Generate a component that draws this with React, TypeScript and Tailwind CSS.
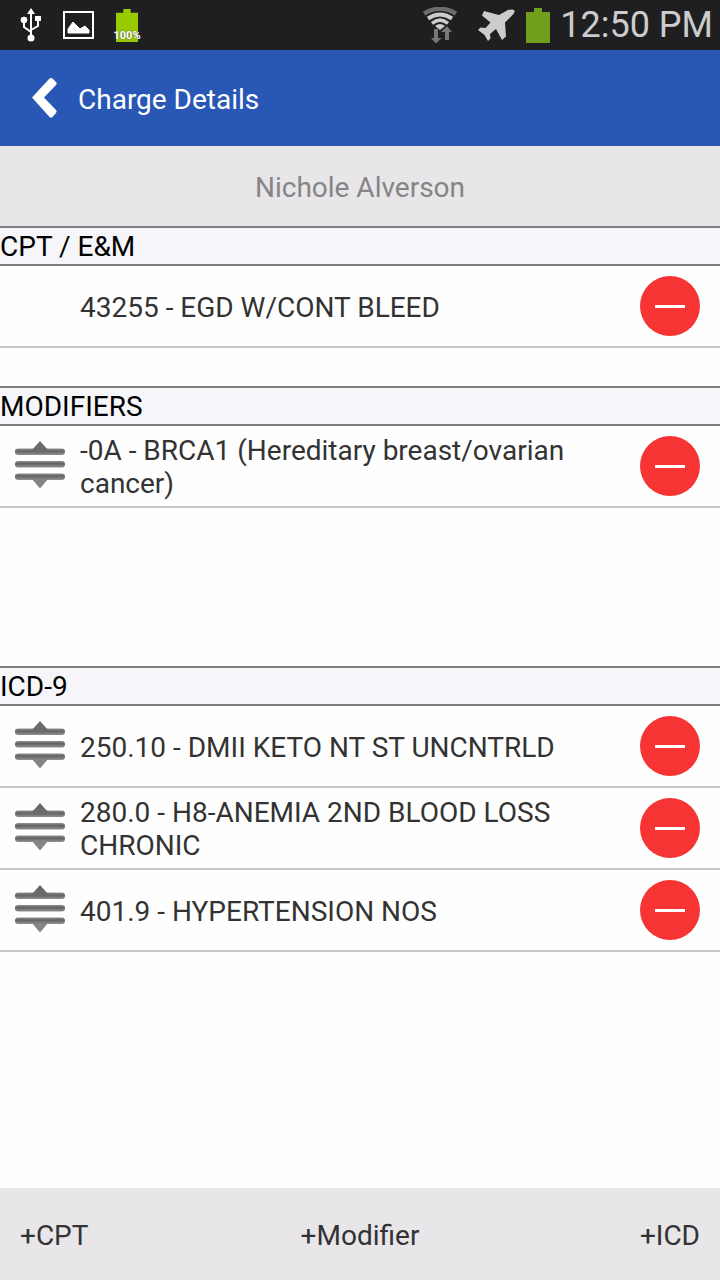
import React, { useState } from 'react';

interface ChargeItem {
  id: string;
  label: string;
}

const initialCpt: ChargeItem[] = [{ id: 'cpt-43255', label: '43255 - EGD W/CONT BLEED' }];

const initialModifiers: ChargeItem[] = [
  { id: 'mod-0a', label: '-0A - BRCA1 (Hereditary breast/ovarian cancer)' },
];

const initialIcd: ChargeItem[] = [
  { id: 'icd-250.10', label: '250.10 - DMII KETO NT ST UNCNTRLD' },
  { id: 'icd-280.0', label: '280.0 - H8-ANEMIA 2ND BLOOD LOSS CHRONIC' },
  { id: 'icd-401.9', label: '401.9 - HYPERTENSION NOS' },
];

const UsbIcon = () => (
  <svg width="22" height="34" viewBox="0 0 22 34" fill="none" stroke="#fff" strokeWidth="2" aria-hidden="true">
    <path d="M11 4v26M4 14v5l7 5M18 12v6l-7 4" />
    <path d="M11 0l4 6H7z" fill="#fff" stroke="none" />
    <circle cx="4" cy="12" r="3.3" fill="#fff" stroke="none" />
    <path d="M15 8h6v5h-6z" fill="#fff" stroke="none" />
    <circle cx="11" cy="30" r="3.5" fill="#fff" stroke="none" />
  </svg>
);

const PictureIcon = () => (
  <svg width="31" height="28" viewBox="0 0 31 28" aria-hidden="true">
    <path d="M1 1h29v26H1z" fill="none" stroke="#fff" strokeWidth="2" />
    <path d="M5 22v-4l5-7 5 5 2 2 5-3 4 4v3z" fill="#fff" stroke="#fff" strokeLinejoin="round" />
  </svg>
);

const WifiIcon = () => (
  <svg width="34" height="36" viewBox="0 0 34 36" fill="none" aria-hidden="true">
    <path d="M1 6.5Q17-3 33 6.5" stroke="#6c6c6c" strokeWidth="4.5" />
    <path d="M5 11.5Q17 3.5 29 11.5" stroke="#ccc" strokeWidth="4" />
    <path d="M9 16.3Q17 10 25 16.3" stroke="#ccc" strokeWidth="3.5" />
    <path d="M12 19Q17 15 22 19l-5 4z" fill="#ccc" />
    <path d="M11 22h4v9h3.5L13 36.5 8 31h3z" fill="#777" />
    <path d="M22 33h4v-8h3l-5-6-6 6h4z" fill="#777" />
  </svg>
);

const PlaneIcon = () => (
  <svg width="38" height="32" viewBox="0 0 38 32" fill="#ccc" aria-hidden="true">
    <path d="M37 1c1 1 .5 3-1 4.500l-8 8 1 14-4 3.500-6-11-6 5 .5 4.500-2.500 2.500-3.500-6L1 21l2.500-2.500 5 .5 5-5.500L5 6.500 7 2l15 4 8-4.500c2-1 6-1.500 7-.5z" />
  </svg>
);

const BatteryIcon = ({ color, width, height }: { color: string; width: number; height: number }) => (
  <svg width={width} height={height} viewBox="0 0 24 35" preserveAspectRatio="none" aria-hidden="true">
    <path d="M8 0h8v4h8v31H0V4h8z" fill={color} />
  </svg>
);

const BackIcon = () => (
  <svg width="26" height="42" viewBox="0 0 26 42" aria-hidden="true">
    <path d="M0 20.500L17.500 1.500q1.500-1 3 0l3.500 3.500q1.500 1.500 0 3L12 20.500 24 33q1.500 1.500 0 3l-3.500 4q-1.500 1.500-3 0z" fill="#fff" />
  </svg>
);

const DragIcon = () => (
  <svg width="50" height="52" viewBox="0 0 50 52" aria-hidden="true">
    <defs>
      <linearGradient id="bar" x1="0" y1="0" x2="0" y2="1">
        <stop offset="0" stopColor="#909090" />
        <stop offset="0.4" stopColor="#626262" />
        <stop offset="1" stopColor="#929292" />
      </linearGradient>
    </defs>
    <rect y="8.5" width="50" height="6.5" rx="3.2" fill="url(#bar)" />
    <path d="M17 10l8-9 8 9-4 3h-8z" fill="#6a6a6a" />
    <rect y="21" width="50" height="6.5" rx="3.2" fill="url(#bar)" />
    <rect y="33.5" width="50" height="6.5" rx="3.2" fill="url(#bar)" />
    <path d="M17 39h16l-8 9.5z" fill="#858585" />
  </svg>
);

const StatusBar = () => (
  <div className="flex h-[50px] items-center justify-between bg-[#1f1f21] pl-5 pr-[7px]">
    <div className="flex items-center gap-[21px]">
      <UsbIcon />
      <PictureIcon />
      <div className="relative flex w-6 justify-center">
        <BatteryIcon color="#99cc00" width={22} height={33} />
        <span className="absolute bottom-0 text-[11px] leading-3 font-bold text-white [text-shadow:0_0_2px_#555]">
          100%
        </span>
      </div>
    </div>
    <div className="flex items-center">
      <WifiIcon />
      <div className="ml-5 mr-[10px] flex items-center gap-[11px]">
        <PlaneIcon />
        <BatteryIcon color="#709f1b" width={24} height={35} />
      </div>
      <span className="text-[36px] leading-[50px] text-[#ccc]">12:50 PM</span>
    </div>
  </div>
);

interface ChargeRowProps {
  item: ChargeItem;
  sortable?: boolean;
  onRemove: (id: string) => void;
}

const ChargeRow: React.FC<ChargeRowProps> = ({ item, sortable, onRemove }) => (
  <li className="flex min-h-[82px] items-center border-b-2 border-[#c8c8c8] pr-5">
    <div className="flex w-20 shrink-0 justify-center">
      {sortable && (
        <button type="button" aria-label={`Move ${item.label}`}>
          <DragIcon />
        </button>
      )}
    </div>
    <span className="flex-1 pt-0.5 text-[28px] leading-[33px] text-[#333]">{item.label}</span>
    <button
      type="button"
      onClick={() => onRemove(item.id)}
      aria-label={`Remove ${item.label}`}
      className="ml-2 flex size-[60px] shrink-0 items-center justify-center rounded-full bg-[#f63434]"
    >
      <span className="h-[3px] w-[30px] bg-white" />
    </button>
  </li>
);

interface SectionProps {
  title: string;
  items: ChargeItem[];
  sortable?: boolean;
  onRemove: (id: string) => void;
}

const Section: React.FC<SectionProps> = ({ title, items, sortable, onRemove }) => (
  <section>
    <h2 className="border-y-2 border-[#808080] bg-[#f6f5f9] pt-0.5 text-[28px] leading-[34px] text-black">{title}</h2>
    <ul>
      {items.map(item => (
        <ChargeRow key={item.id} item={item} sortable={sortable} onRemove={onRemove} />
      ))}
    </ul>
  </section>
);

const App: React.FC = () => {
  const [cpt, setCpt] = useState(initialCpt);
  const [modifiers, setModifiers] = useState(initialModifiers);
  const [icd, setIcd] = useState(initialIcd);

  const without = (id: string) => (items: ChargeItem[]) => items.filter(item => item.id !== id);

  return (
    <div className="flex min-h-screen flex-col bg-[#fefefe] font-[Roboto,sans-serif]">
      <StatusBar />

      {/* Header */}
      <header className="flex h-24 items-center gap-5 bg-[#2857b5] pl-8">
        <button type="button" aria-label="Back">
          <BackIcon />
        </button>
        <h1 className="pt-1 text-[28px] leading-9 text-white">Charge Details</h1>
      </header>

      <div className="flex h-20 items-center justify-center bg-[#e8e6e9] pt-1 text-[28px] text-[#858585]">
        Nichole Alverson
      </div>

      {/* Charges */}
      <main className="flex-1">
        <Section title="CPT / E&M" items={cpt} onRemove={id => setCpt(without(id))} />
        <div className="mt-[38px] mb-[158px]">
          <Section title="MODIFIERS" items={modifiers} sortable onRemove={id => setModifiers(without(id))} />
        </div>
        <Section title="ICD-9" items={icd} sortable onRemove={id => setIcd(without(id))} />
      </main>

      {/* Actions */}
      <footer className="grid h-[92px] grid-cols-3 items-center bg-[#e8e6e9] px-5 pt-1 text-[28px] text-[#333]">
        <button type="button" className="justify-self-start">+CPT</button>
        <button type="button" className="justify-self-center">+Modifier</button>
        <button type="button" className="justify-self-end">+ICD</button>
      </footer>
    </div>
  );
};

export default App;
